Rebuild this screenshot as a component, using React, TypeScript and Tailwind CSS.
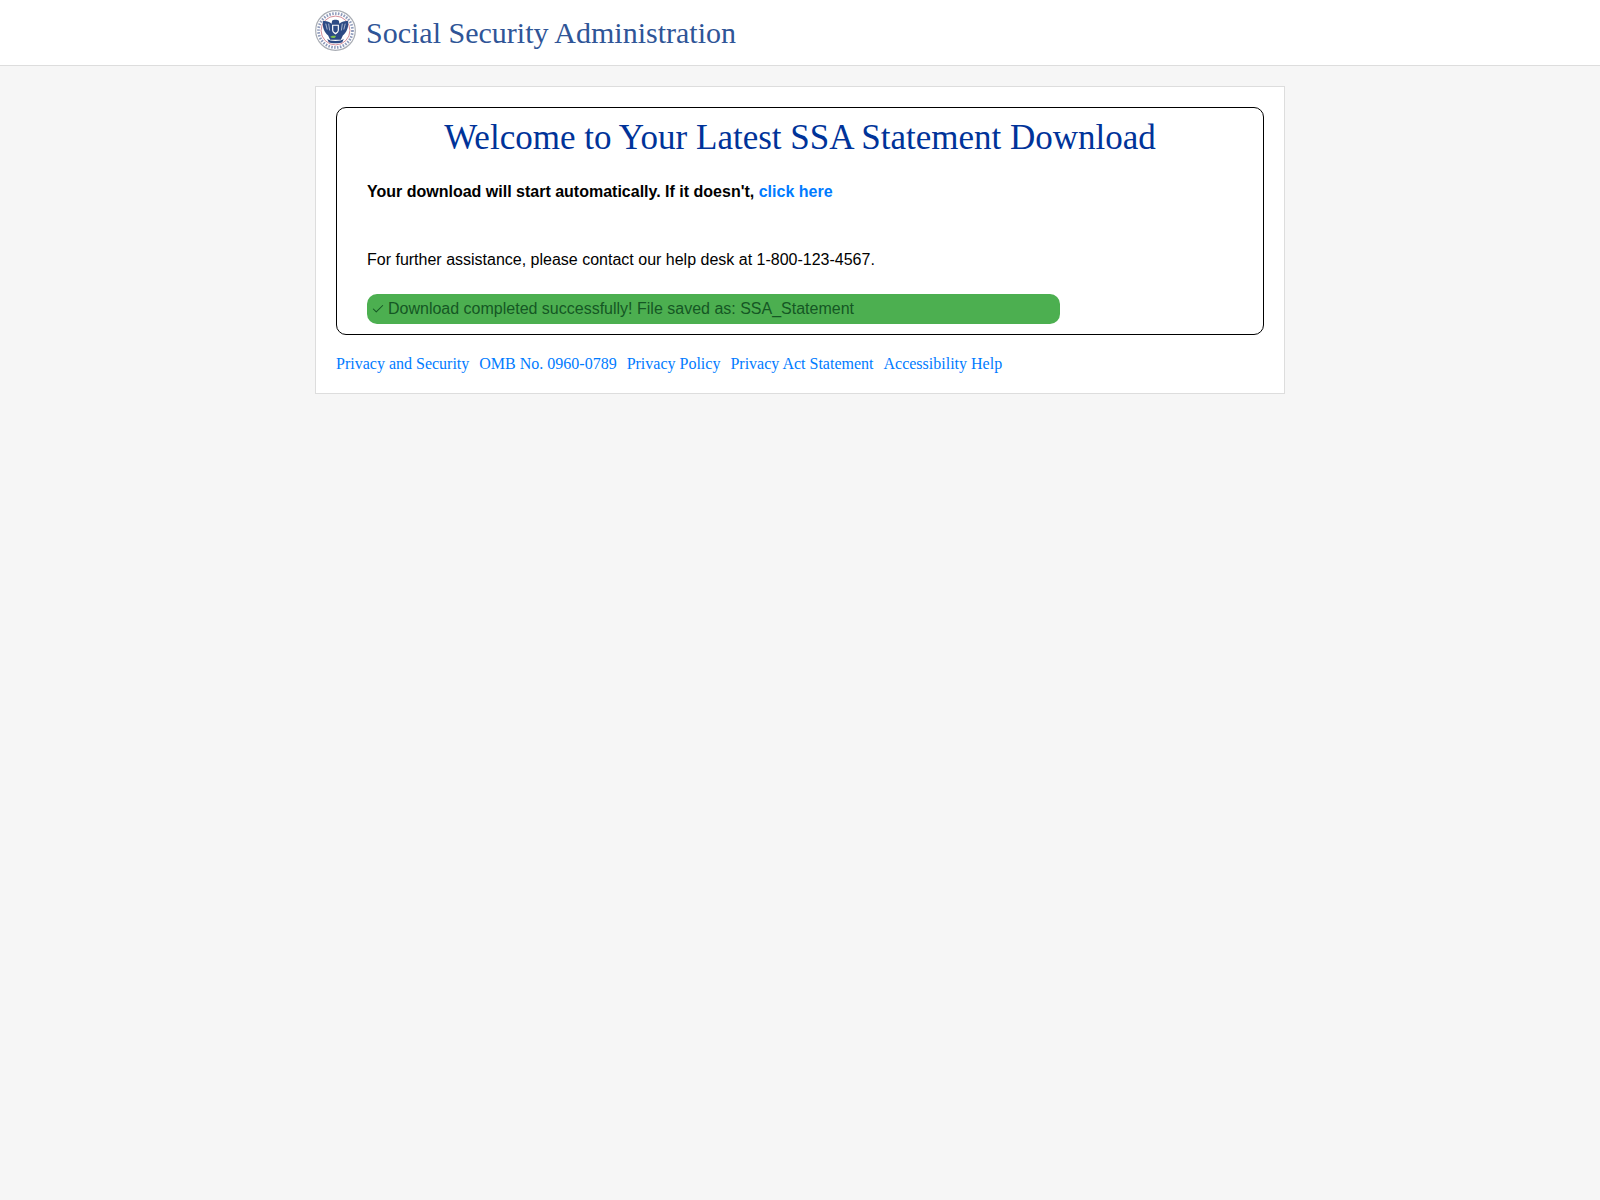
import { Check } from "lucide-react";

const footerLinks = [
  "Privacy and Security",
  "OMB No. 0960-0789",
  "Privacy Policy",
  "Privacy Act Statement",
  "Accessibility Help",
];

function Seal() {
  return (
    <svg width="41" height="41" viewBox="0 0 42 42" className="shrink-0">
      <circle cx="21" cy="21" r="20.3" fill="#ffffff" stroke="#a9adb4" strokeWidth="1.2" />
      <circle cx="21" cy="21" r="17.4" fill="none" stroke="#8f9bbb" strokeWidth="2.8" strokeDasharray="1.6 1.4" />
      <circle cx="21" cy="21" r="14.8" fill="#ffffff" stroke="#c0586a" strokeWidth="0.7" />
      {/* wings */}
      <path d="M8 11.500c3.500-.5 6.500 .5 9 2.500l.5-3c1.500-1.200 5.500-1.200 7 0l.5 3c2.500-2 5.500-3 9-2.500 .5 6.500-1.500 11.500-5.500 14.500l-2 4.500h-11l-2-4.500c-4-3-6-8-5.500-14.500z" fill="#2c4a84" />
      <path d="M11 14l1.500 6M14 14l1 7M31 14l-1.500 6M28 14l-1 7" stroke="#dfe5f0" strokeWidth="0.7" />
      {/* shield */}
      <path d="M17.500 15h7v5.500c0 2-1.500 3.500-3.500 4.500-2-1-3.500-2.500-3.500-4.500z" fill="#ffffff" />
      <path d="M18.700 16.200h4.600v4.200c0 1.300-1 2.300-2.300 3-1.300-.7-2.300-1.700-2.300-3z" fill="#2c4a84" />
      {/* land */}
      <path d="M15.500 27.500c1.500-1.300 4-1.500 6-.8l-1 1.800c-2 .5-3.800 .2-5-1z" fill="#7cc04b" />
      <path d="M12.500 29.500c3 3 14 3 17 0l-1.500 3.500c-3 1.500-11 1.500-14 0z" fill="#2c4a84" />
    </svg>
  );
}

export default function App() {
  return (
    <div className="min-h-[1200px] bg-[#f6f6f6] font-['Liberation_Serif',serif]">
      <header className="h-[66px] border-b border-[#dddddd] bg-white">
        <div className="mx-auto flex w-[970px] items-start gap-[10px] pt-[10px]">
          <Seal />
          <h1 className="pt-[1px] text-[30px] leading-[44px] font-normal text-[#2f5597]">
            Social Security Administration
          </h1>
        </div>
      </header>

      <main className="mx-auto mt-5 w-[970px] border border-[#dddddd] bg-white px-5 pt-5 pb-[18px]">
        <section className="h-[228px] rounded-[10px] border border-black px-[30px]">
          <h2 className="pt-[8px] text-center text-[35px] leading-[44px] font-normal text-[#003399]">
            Welcome to Your Latest SSA Statement Download
          </h2>
          <p className="mt-[21px] font-['Liberation_Sans',sans-serif] text-[16px] leading-[22px] font-bold text-black">
            Your download will start automatically. If it doesn't,{" "}
            <a className="text-[#007bff]">click here</a>
          </p>
          <p className="mt-[46px] font-['Liberation_Sans',sans-serif] text-[16px] leading-[22px] text-black">
            For further assistance, please contact our help desk at 1-800-123-4567.
          </p>
          <div className="mt-[23px] flex h-[30px] w-[693px] items-center gap-[3px] rounded-[10px] bg-[#4caf50] pl-[4px] font-['Liberation_Sans',sans-serif] text-[16px] text-[#155724]">
            <Check size={14} strokeWidth={1.75} />
            <span>Download completed successfully! File saved as: SSA_Statement</span>
          </div>
        </section>

        <nav className="mt-[18px] flex gap-[10px] text-[16px] leading-[22px] text-[#007bff]">
          {footerLinks.map((label) => (
            <a key={label}>{label}</a>
          ))}
        </nav>
      </main>
    </div>
  );
}
